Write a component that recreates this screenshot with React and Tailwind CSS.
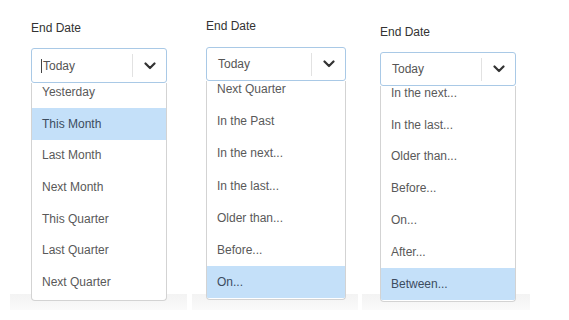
import React from "react";

const OPTIONS = [
  "Today",
  "Yesterday",
  "This Month",
  "Last Month",
  "Next Month",
  "This Quarter",
  "Last Quarter",
  "Next Quarter",
  "In the Past",
  "In the next...",
  "In the last...",
  "Older than...",
  "Before...",
  "On...",
  "After...",
  "Between...",
];

const PANELS = [
  {
    outer: "w-[177px]",
    inner: "pl-[21px] pt-[20px]",
    inputMt: "mt-[12px]",
    width: "w-[136px]",
    inputH: "h-[35px]",
    listH: "h-[218px]",
    scroll: "-mt-[6.7px]",
    itemH: "h-[31.67px]",
    strip: "-mt-[7px]",
    first: 1,
    selected: 2,
    cursor: true,
  },
  {
    outer: "w-[166px] ml-[5px]",
    inner: "pl-[14px] pt-[18px]",
    inputMt: "mt-[13px]",
    width: "w-[140px]",
    inputH: "h-[34px]",
    listH: "h-[219px]",
    scroll: "-mt-[8px]",
    itemH: "h-[32.2px]",
    strip: "-mt-[6px]",
    first: 7,
    selected: 13,
    cursor: false,
  },
  {
    outer: "w-[168px] ml-[4px]",
    inner: "pl-[18px] pt-[24px]",
    inputMt: "mt-[12px]",
    width: "w-[136px]",
    inputH: "h-[34px]",
    listH: "h-[216px]",
    scroll: "-mt-[9px]",
    itemH: "h-[31.8px]",
    strip: "-mt-[8px]",
    first: 9,
    selected: 15,
    cursor: false,
  },
];

function Chevron() {
  return (
    <svg width="12" height="8" viewBox="0 0 12 8" fill="none">
      <path
        d="M1.5 1.5 L6 6 L10.5 1.5"
        stroke="#333"
        strokeWidth="2.2"
        strokeLinecap="round"
        strokeLinejoin="round"
      />
    </svg>
  );
}

function Panel({ p }) {
  const items = OPTIONS.slice(p.first, p.first + 7).map((label, i) => ({
    label,
    idx: p.first + i,
  }));
  return (
    <div className={`flex flex-col ${p.outer}`}>
      <div className={`flex flex-col ${p.inner}`}>
        <div className="text-[12px] leading-[16px] text-[#333]">End Date</div>
        <div
          className={`${p.inputMt} ${p.width} ${p.inputH} relative z-20 flex items-center rounded-[3px] border border-[#a9c9e6] bg-white`}
        >
          <div className="flex flex-1 items-center pl-[9px] text-[12px] text-[#555]">
            {p.cursor ? (
              <span className="mr-[1px] inline-block h-[14px] w-px bg-[#444]" />
            ) : (
              <span className="inline-block w-[2px]" />
            )}
            <span>Today</span>
          </div>
          <div className="h-[23px] w-px bg-[#e2e2e2]" />
          <div className="flex w-[33px] items-center justify-center">
            <Chevron />
          </div>
        </div>
        <div
          className={`${p.width} ${p.listH} relative z-10 overflow-hidden rounded-b-[4px] border border-t-0 border-[#d3d3d3] bg-white`}
        >
          <div className={p.scroll}>
            {items.map((it) => (
              <div
                key={it.label}
                className={`${p.itemH} flex items-center pl-[10px] text-[12px] ${
                  it.idx === p.selected
                    ? "bg-[#c4e0f9] text-[#3c4c5f]"
                    : "text-[#595959]"
                }`}
              >
                {it.label}
              </div>
            ))}
          </div>
        </div>
      </div>
      <div
        className={`${p.strip} h-[16px] bg-gradient-to-b from-[#f3f3f3] to-[#fafafa]`}
      />
    </div>
  );
}

export default function App() {
  return (
    <div
      className="h-[320px] w-[569px] overflow-hidden bg-white"
      style={{ fontFamily: '"Liberation Sans", Arial, sans-serif' }}
    >
      <div className="ml-[10px] flex">
        {PANELS.map((p, i) => (
          <Panel key={i} p={p} />
        ))}
      </div>
    </div>
  );
}
